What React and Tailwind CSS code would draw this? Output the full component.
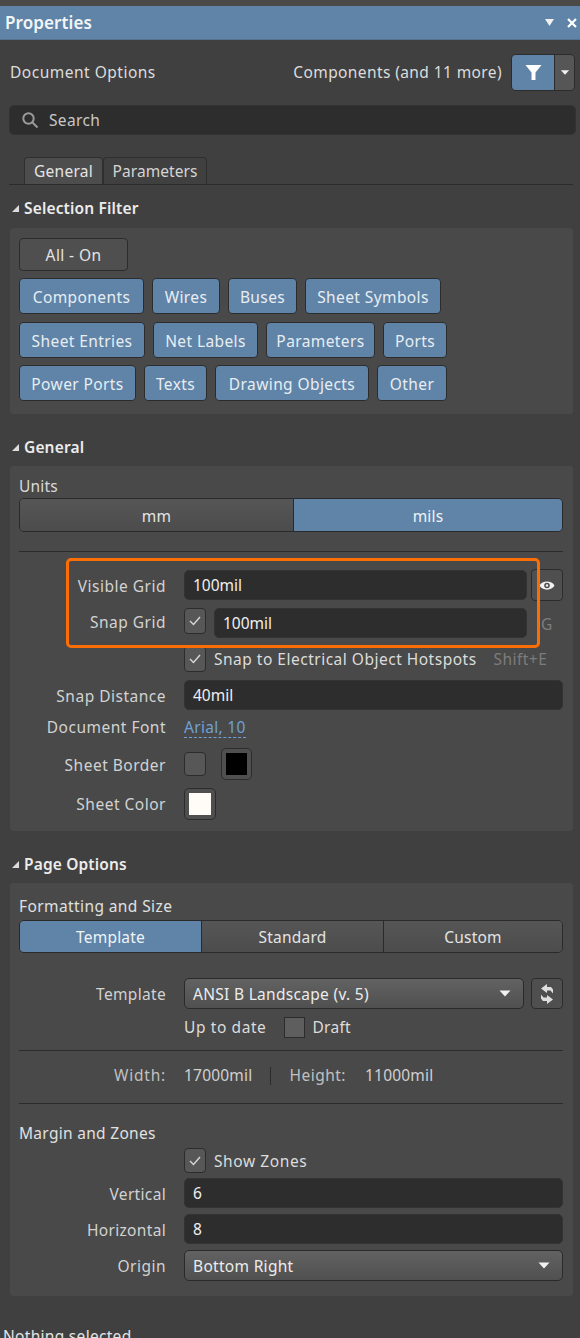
const font = { fontFamily: '"Noto Sans", sans-serif' };

const Tri = ({ className = "" }) => (
  <svg width="12" height="7" viewBox="0 0 12 7" className={className}>
    <path d="M0.5 0.5h11L6 6.500z" fill="#f1f1f1" />
  </svg>
);

const Check = () => (
  <svg width="12" height="10" viewBox="0 0 12 10" fill="none">
    <path d="M1 5l3.500 3.500L11 1" stroke="#d8d8d8" strokeWidth="1.4" />
  </svg>
);

const CheckBox = ({ checked = true, h = "h-[26px]" }) => (
  <div className={`w-[22px] shrink-0 flex items-center justify-center rounded-[4px] border border-[#2c2c2c] bg-[#575757] ${h}`}>
    {checked && <Check />}
  </div>
);

const SectionHead = ({ title, className = "" }) => (
  <div className={`flex items-center h-5 pl-3 gap-[5px] text-[15.5px] font-semibold tracking-[0.15px] text-[#ececec] ${className}`}>
    <svg width="7" height="7" viewBox="0 0 7 7">
      <path d="M7 0v7H0z" fill="#dcdcdc" />
    </svg>
    <span className="pt-[2px]">{title}</span>
  </div>
);

const Chip = ({ children, w }) => (
  <div
    className="h-9 pt-[3px] flex items-center justify-center rounded-[4px] border border-[#2c2c2c] bg-[#5f84a8] text-[#e8edf2] text-[15.5px] tracking-[0.4px] whitespace-nowrap"
    style={{ width: w }}
  >
    {children}
  </div>
);

const Label = ({ children, className = "" }) => (
  <div className={`w-[147px] shrink-0 pt-[3px] text-right text-[#d2d2d2] text-[15.5px] tracking-[0.5px] whitespace-nowrap ${className}`}>
    {children}
  </div>
);

const Input = ({ value, className = "" }) => (
  <div className={`h-[30px] pt-px flex items-center px-2 rounded-[5px] border border-[#333] bg-[#2d2d2d] text-[#f0f0f0] text-[15.5px] ${className}`}>
    {value}
  </div>
);

const Select = ({ value, className = "" }) => (
  <div className={`h-[31px] flex items-center justify-between pl-2 pr-3 rounded-[5px] border border-[#2a2a2a] bg-gradient-to-b from-[#626262] to-[#505050] text-[#ececec] text-[15.5px] tracking-[0.3px] ${className}`}>
    <span className="pt-[2px]">{value}</span>
    <Tri />
  </div>
);

const Segment = ({ items, active, className = "" }) => (
  <div className={`flex rounded-[5px] border border-[#2a2a2a] overflow-hidden ${className}`}>
    {items.map((it, i) => (
      <div
        key={it.label}
        style={{ flex: it.flex }}
        className={`pt-[3px] flex items-center justify-center text-[15.5px] tracking-[0.2px] ${i > 0 ? "border-l border-[#2a2a2a]" : ""} ${
          i === active ? "bg-[#5f84a8] text-[#f0f3f6]" : "bg-gradient-to-b from-[#565656] to-[#4c4c4c] text-[#e4e4e4]"
        }`}
      >
        {it.label}
      </div>
    ))}
  </div>
);

const Row = ({ className = "", children }) => (
  <div className={`flex items-center gap-[18px] ${className}`}>{children}</div>
);

const Spacer = () => <div className="w-[147px] shrink-0" />;

const Rule = ({ className = "" }) => <div className={`h-px bg-[#2b2b2b] ${className}`} />;

export default function App() {
  return (
    <div style={font} className="w-[580px] h-[1338px] overflow-hidden bg-[#404040] text-[#dcdcdc] text-[15.5px]">
      <div className="h-[6px] bg-[#4b4a48]" />

      {/* title bar */}
      <div className="h-[34px] flex items-center justify-between pl-[5px] pr-[3px] bg-[#6084a7] border-b border-[#55738f]">
        <span className="text-[17px] font-semibold tracking-[0.1px] text-[#f2f5f8]">Properties</span>
        <div className="flex items-center gap-[13px]">
          <svg width="9" height="7" viewBox="0 0 9 7">
            <path d="M0 0h9L4.500 7z" fill="#f1f1f1" />
          </svg>
          <svg width="10" height="10" viewBox="0 0 10 10" fill="none" stroke="#fff" strokeWidth="2.2">
            <path d="M1 1l8 8M9 1l-8 8" />
          </svg>
        </div>
      </div>

      {/* document options */}
      <div className="flex items-center justify-between h-[37px] mt-[14px] pl-[10px] pr-[5px]">
        <span className="tracking-[0.5px]">Document Options</span>
        <div className="flex items-center gap-[9px]">
          <span className="tracking-[0.4px]">Components (and 11 more)</span>
          <div className="flex h-[37px] rounded-[5px] border border-[#2c2c2c] overflow-hidden">
            <div className="w-[42px] bg-[#5f84a8] flex items-center justify-center">
              <svg width="17" height="17" viewBox="0 0 17 17">
                <path d="M0.5 1h16L10.500 8.500V16h-4V8.500z" fill="#fff" />
              </svg>
            </div>
            <div className="w-5 bg-[#565656] border-l border-[#2c2c2c] flex items-center justify-center">
              <Tri className="scale-75" />
            </div>
          </div>
        </div>
      </div>

      {/* search */}
      <div className="mt-[14px] mx-[9px] w-[567px] h-[30px] flex items-center gap-[10px] pl-[11px] rounded-[5px] border border-[#333] bg-[#2d2d2d] text-[#c8c8c8] tracking-[0.35px]">
        <svg width="18" height="18" viewBox="0 0 18 18" fill="none" stroke="#9a9a9a" strokeWidth="2">
          <circle cx="7.500" cy="7.500" r="5.200" />
          <path d="M11.500 11.500L16.500 16.500" />
        </svg>
        <span className="pt-px">Search</span>
      </div>

      {/* tabs */}
      <div className="mt-[21px] mx-[9px] w-[564px] h-[29px] flex items-end pl-[15px] border-b border-[#2b2b2b]">
        <div className="w-[79px] h-[27px] pt-[2px] flex items-center justify-center rounded-t-[4px] border border-b-0 border-[#2f2f2f] bg-[#4d4d4d] text-[#e4e4e4] tracking-[0.3px]">General</div>
        <div className="w-[104px] h-[27px] pt-[2px] flex items-center justify-center rounded-t-[4px] border border-b-0 border-[#2f2f2f] text-[#d4d4d4] tracking-[0.05px]">Parameters</div>
      </div>

      <SectionHead title="Selection Filter" className="mt-[13px]" />

      {/* selection filter */}
      <div className="mt-[10px] ml-[10px] w-[563px] h-[186px] rounded-[4px] bg-[#494949] pl-[9px] pt-[10px]">
        <div className="w-[109px] h-[33px] pt-[2px] flex items-center justify-center rounded-[4px] border border-[#2c2c2c] bg-[#4f4f4f] text-[#e4e4e4] tracking-[0.4px]">All - On</div>
        <div className="flex gap-2 mt-[7px]">
          <Chip w={125}>Components</Chip>
          <Chip w={68}>Wires</Chip>
          <Chip w={69}>Buses</Chip>
          <Chip w={136}>Sheet Symbols</Chip>
        </div>
        <div className="flex gap-2 mt-2">
          <Chip w={126}>Sheet Entries</Chip>
          <Chip w={105}>Net Labels</Chip>
          <Chip w={109}>Parameters</Chip>
          <Chip w={64}>Ports</Chip>
        </div>
        <div className="flex gap-2 mt-[7px]">
          <Chip w={117}>Power Ports</Chip>
          <Chip w={63}>Texts</Chip>
          <Chip w={154}>Drawing Objects</Chip>
          <Chip w={70}>Other</Chip>
        </div>
      </div>

      <SectionHead title="General" className="mt-[23px]" />

      {/* general */}
      <div className="relative mt-[9px] ml-[10px] w-[563px] h-[365px] rounded-[4px] bg-[#494949] pl-[9px] pt-[10px] pr-[10px]">
        <div className="h-[22px] leading-[20px] tracking-[0.2px] text-[#d8d8d8]">Units</div>
        <Segment
          className="h-[34px]"
          active={1}
          items={[{ label: "mm", flex: "0 0 273px" }, { label: "mils", flex: "1 1 0" }]}
        />
        <Rule className="mt-[19px]" />

        <Row className="mt-[17px]">
          <Label>Visible Grid</Label>
          <Input value="100mil" className="w-[343px]" />
          <div className="w-8 h-8 -ml-[14px] flex items-center justify-center rounded-[4px] border border-[#2c2c2c] bg-[#4f4f4f]">
            <svg width="16" height="13" viewBox="0 0 16 13">
              <path d="M0.500 6.500C3 1 13 1 15.500 6.500C13 12 3 12 0.500 6.500z" fill="#f2f2f2" />
              <circle cx="8" cy="6.500" r="2.800" fill="#4f4f4f" />
              <circle cx="8" cy="6.500" r="1.200" fill="#f2f2f2" />
            </svg>
          </div>
        </Row>
        <Row className="mt-[7px]">
          <Label className="-mt-[4px]">Snap Grid</Label>
          <div className="flex gap-2 items-start">
            <CheckBox />
            <Input value="100mil" className="w-[313px] h-[29px]" />
          </div>
          <span className="-ml-1 mt-[3px] text-[#7c7c7c]">G</span>
        </Row>
        <Row className="mt-2">
          <Spacer />
          <div className="flex gap-2 items-center">
            <CheckBox />
            <span className="pt-[2px] tracking-[0.5px] whitespace-nowrap">Snap to Electrical Object Hotspots</span>
          </div>
          <span className="pt-[2px] text-[#7c7c7c] -ml-[1px] tracking-[0.45px] whitespace-nowrap">Shift+E</span>
        </Row>
        <Row className="mt-2">
          <Label>Snap Distance</Label>
          <Input value="40mil" className="flex-1" />
        </Row>
        <Row className="mt-[5px] h-[26px]">
          <Label className="!pt-0">Document Font</Label>
          <span className="text-[#6fa0d6] border-b border-dashed border-[#6fa0d6] leading-[19px] tracking-[0.3px]">Arial, 10</span>
        </Row>
        <Row className="mt-[7px]">
          <Label>Sheet Border</Label>
          <div className="flex gap-[15px] items-center">
            <CheckBox checked={false} h="h-[24px]" />
            <div className="w-[31px] h-8 rounded-[5px] border border-[#2c2c2c] bg-[#4f4f4f] p-1">
              <div className="w-full h-full bg-black" />
            </div>
          </div>
        </Row>
        <Row className="mt-2">
          <Label className="!pt-[1px]">Sheet Color</Label>
          <div className="w-8 h-8 rounded-[5px] border border-[#2c2c2c] bg-[#4f4f4f] p-1">
            <div className="w-full h-full bg-[#fffbf7]" />
          </div>
        </Row>

        {/* callout round the grid fields */}
        <div className="absolute left-[56px] top-[92px] w-[474px] h-[90px] rounded-[5px] border-[3px] border-[#fb6e05] pointer-events-none" />
      </div>

      <SectionHead title="Page Options" className="mt-[23px]" />

      {/* page options */}
      <div className="mt-[9px] ml-[10px] w-[563px] h-[413px] rounded-[4px] bg-[#494949] pl-[9px] pt-[12px] pr-[10px]">
        <div className="h-[22px] leading-[22px] text-[#e0e0e0] tracking-[0.4px]">Formatting and Size</div>
        <Segment
          className="h-[33px] mt-[3px]"
          active={0}
          items={[
            { label: "Template", flex: "0 0 181px" },
            { label: "Standard", flex: "0 0 182px" },
            { label: "Custom", flex: "1 1 0" },
          ]}
        />
        <Row className="mt-[25px]">
          <Label className="tracking-[0.33px]">Template</Label>
          <Select value="ANSI B Landscape (v. 5)" className="w-[340px]" />
          <div className="w-8 h-[31px] -ml-[11px] flex items-center justify-center rounded-[4px] border border-[#2c2c2c] bg-[#4f4f4f]">
            <svg width="14" height="20" viewBox="0 0 14 20" fill="#dedede">
              <path d="M7 0L1 4.500L7 9V6.500H10.500L13 9.500V5.500L11 3H7z" />
              <path d="M7 20L13 15.500L7 11V13.500H3.500L1 10.500V14.500L3 17H7z" />
            </svg>
          </div>
        </Row>
        <Row className="mt-2 h-[21px]">
          <Spacer />
          <div className="flex items-center">
            <span className="tracking-[0.6px]">Up to date</span>
            <div className="w-[21px] h-[21px] ml-[18px] border border-[#2c2c2c] bg-[#5e5e5e]" />
            <span className="ml-[7px] tracking-[0.3px]">Draft</span>
          </div>
        </Row>
        <Rule className="mt-3" />
        <Row className="mt-[15px] h-5">
          <Label className="!text-[#c0c0c0] !tracking-[0.8px] !pt-0">Width:</Label>
          <div className="flex items-center text-[#d0d0d0] tracking-[0.2px]">
            <span>17000mil</span>
            <div className="w-px h-[18px] bg-[#2b2b2b] mx-[18px]" />
            <span className="text-[#c0c0c0] tracking-[0.5px]">Height:</span>
            <span className="ml-[19px]">11000mil</span>
          </div>
        </Row>
        <Rule className="mt-[17px]" />
        <div className="h-[22px] mt-[18px] leading-[22px] text-[#e0e0e0] tracking-[0.3px]">Margin and Zones</div>
        <Row className="mt-1">
          <Spacer />
          <div className="flex gap-2 items-center">
            <CheckBox h="h-[25px]" />
            <span className="pt-[2px] tracking-[0.6px]">Show Zones</span>
          </div>
        </Row>
        <Row className="mt-[5px]">
          <Label className="tracking-[0.33px]">Vertical</Label>
          <Input value="6" className="flex-1" />
        </Row>
        <Row className="mt-[6px]">
          <Label className="tracking-[0.33px]">Horizontal</Label>
          <Input value="8" className="flex-1" />
        </Row>
        <Row className="mt-[6px]">
          <Label className="!pt-[1px]">Origin</Label>
          <Select value="Bottom Right" className="flex-1" />
        </Row>
      </div>

      <div className="mt-[30px] pl-[3px] leading-[20px] text-[#e4e4e4] tracking-[0.3px]">Nothing selected</div>
    </div>
  );
}
